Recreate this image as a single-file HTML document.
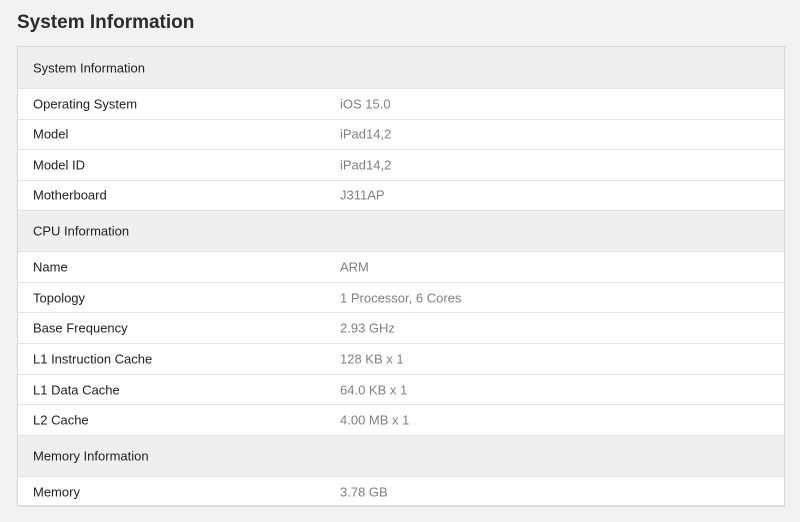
<!DOCTYPE html>
<html><head><meta charset="utf-8"><style>
body{margin:0;background:#f2f2f2;font-family:"Liberation Sans",sans-serif;width:800px;height:522px;overflow:hidden;position:relative}
h1{position:absolute;left:17px;top:12px;margin:0;font-size:19px;font-weight:bold;color:#2b2b2b}
.card{position:absolute;left:17px;top:46px;width:768px;height:460px;background:#fff;border:1px solid #d8d8d8;box-sizing:border-box;box-shadow:0 1px 1px rgba(0,0,0,.08)}
.r{position:absolute;left:0;right:0;border-top:1px solid #e3e3e3;box-sizing:border-box;font-size:13px;color:#222}
.h{background:#efefef}
.r span{position:absolute;left:15px;top:50%;transform:translateY(-50%)}
.r b{font-weight:normal;position:absolute;left:322px;top:50%;transform:translateY(-50%);color:#808080}
</style></head><body>
<h1>System Information</h1>
<div class="card">
<div class="r h" style="top:0;height:41px;border-top:none"><span>System Information</span></div>
<div class="r" style="top:41px;height:30.5px"><span>Operating System</span><b>iOS 15.0</b></div>
<div class="r" style="top:71.5px;height:30.5px"><span>Model</span><b>iPad14,2</b></div>
<div class="r" style="top:102px;height:30.5px"><span>Model ID</span><b>iPad14,2</b></div>
<div class="r" style="top:132.5px;height:30.5px"><span>Motherboard</span><b>J311AP</b></div>
<div class="r h" style="top:163px;height:41px"><span>CPU Information</span></div>
<div class="r" style="top:204px;height:30.7px"><span>Name</span><b>ARM</b></div>
<div class="r" style="top:234.7px;height:30.7px"><span>Topology</span><b>1 Processor, 6 Cores</b></div>
<div class="r" style="top:265.3px;height:30.7px"><span>Base Frequency</span><b>2.93 GHz</b></div>
<div class="r" style="top:296px;height:30.7px"><span>L1 Instruction Cache</span><b>128 KB x 1</b></div>
<div class="r" style="top:326.7px;height:30.7px"><span>L1 Data Cache</span><b>64.0 KB x 1</b></div>
<div class="r" style="top:357.3px;height:30.7px"><span>L2 Cache</span><b>4.00 MB x 1</b></div>
<div class="r h" style="top:388px;height:41px"><span>Memory Information</span></div>
<div class="r" style="top:429px;height:30px"><span>Memory</span><b>3.78 GB</b></div>
</div>
</body></html>
